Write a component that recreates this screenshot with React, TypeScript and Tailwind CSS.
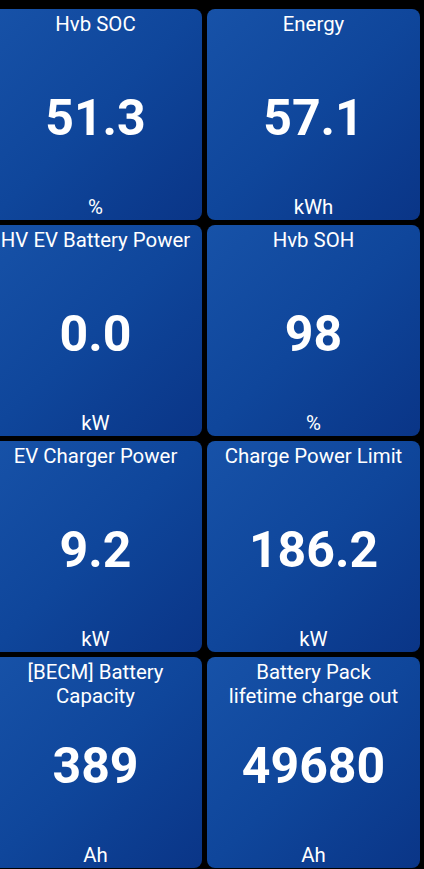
const tiles = [
  { title: ["Hvb SOC"], value: "51.3", unit: "%" },
  { title: ["Energy"], value: "57.1", unit: "kWh" },
  { title: ["HV EV Battery Power"], value: "0.0", unit: "kW" },
  { title: ["Hvb SOH"], value: "98", unit: "%" },
  { title: ["EV Charger Power"], value: "9.2", unit: "kW" },
  { title: ["Charge Power Limit"], value: "186.2", unit: "kW" },
  { title: ["[BECM] Battery", "Capacity"], value: "389", unit: "Ah" },
  { title: ["Battery Pack", "lifetime charge out"], value: "49680", unit: "Ah" },
];

function Tile({ title, value, unit }: { title: string[]; value: string; unit: string }) {
  return (
    <div className="grid h-[211px] rounded-[8px] bg-gradient-to-br from-[#1752a8] via-[#0f469b] to-[#0a3587] text-white">
      <div className="[grid-area:1/1] self-start pt-[3px] text-center text-[20.4px] leading-[24px] whitespace-nowrap">
        {title.map((line) => (
          <div key={line}>{line}</div>
        ))}
      </div>
      <div className="[grid-area:1/1] self-center pt-[6px] text-center text-[50px] font-bold leading-none">
        {value}
      </div>
      <div className="[grid-area:1/1] self-end pb-[1px] text-center text-[20.4px] leading-[24px]">
        {unit}
      </div>
    </div>
  );
}

export default function App() {
  return (
    <div className="h-[869px] w-[424px] overflow-hidden bg-black pt-[9px] font-['Roboto',sans-serif]">
      <div className="ml-[-11px] grid w-[431px] grid-cols-2 gap-[5px]">
        {tiles.map((t) => (
          <Tile key={t.value} {...t} />
        ))}
      </div>
    </div>
  );
}
